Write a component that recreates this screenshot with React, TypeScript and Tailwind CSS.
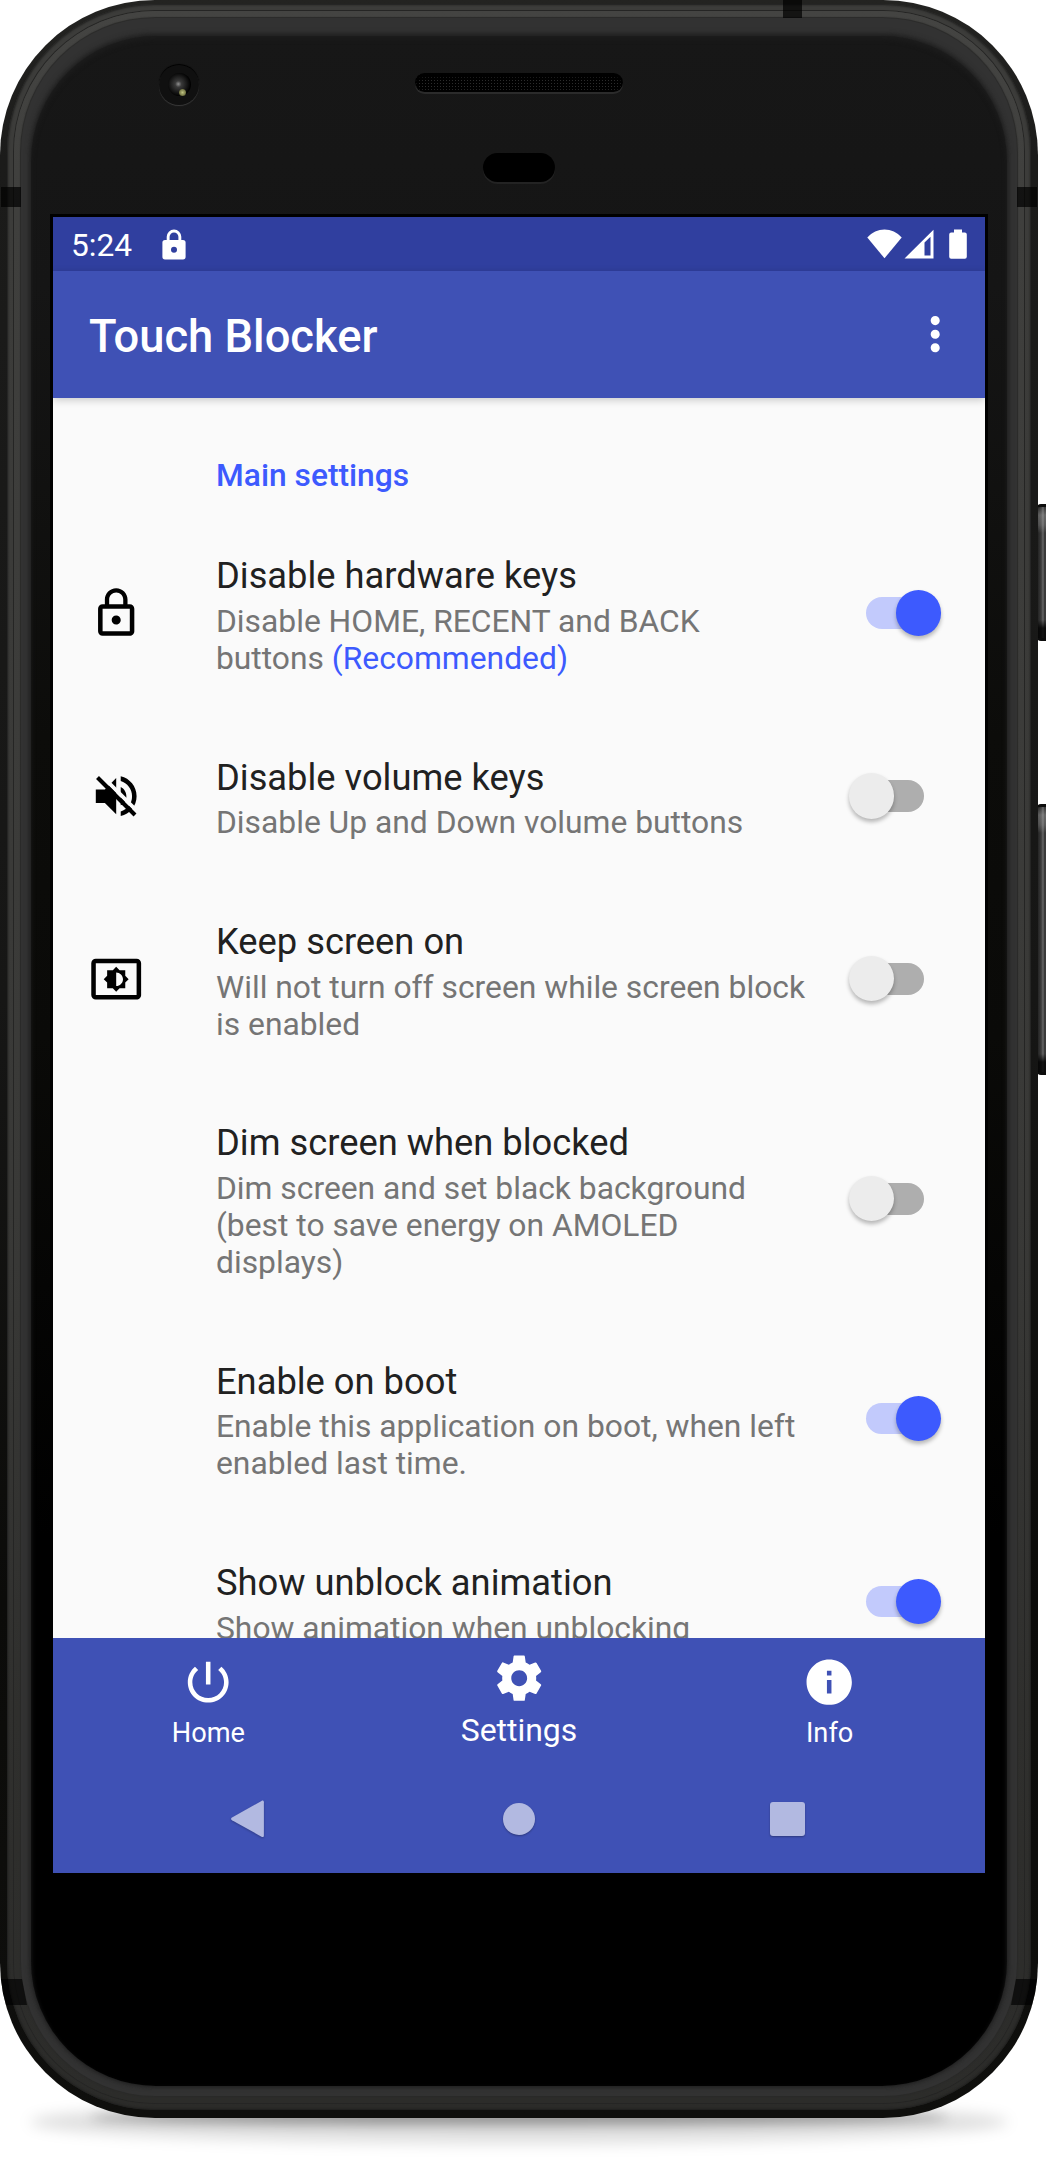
import type { ReactNode } from "react";

type Row = {
  icon?: "lock" | "volume" | "brightness";
  title: string;
  lines: ReactNode[];
  on: boolean;
  height: string;
};

const rows: Row[] = [
  {
    icon: "lock",
    title: "Disable hardware keys",
    lines: [
      "Disable HOME, RECENT and BACK",
      <>
        buttons <span className="text-[#3d5afe]">(Recommended)</span>
      </>,
    ],
    on: true,
    height: "h-[201.3px]",
  },
  { icon: "volume", title: "Disable volume keys", lines: ["Disable Up and Down volume buttons"], on: false, height: "h-[164.5px]" },
  { icon: "brightness", title: "Keep screen on", lines: ["Will not turn off screen while screen block", "is enabled"], on: false, height: "h-[201.3px]" },
  {
    title: "Dim screen when blocked",
    lines: ["Dim screen and set black background", "(best to save energy on AMOLED", "displays)"],
    on: false,
    height: "h-[238.4px]",
  },
  { title: "Enable on boot", lines: ["Enable this application on boot, when left", "enabled last time."], on: true, height: "h-[201.3px]" },
  { title: "Show unblock animation", lines: ["Show animation when unblocking"], on: true, height: "h-[164.5px]" },
];

function Icon({ children, className = "size-[54.4px]" }: { children: ReactNode; className?: string }) {
  return (
    <svg viewBox="0 0 24 24" fill="currentColor" className={`block shrink-0 ${className}`}>
      {children}
    </svg>
  );
}

function RowIcon({ name }: { name?: Row["icon"] }) {
  if (name === "lock")
    return (
      <Icon>
        <path d="M12 17c1.1 0 2-.9 2-2s-.9-2-2-2-2 .9-2 2 .9 2 2 2zm6-9h-1V6c0-2.76-2.24-5-5-5S7 3.24 7 6v2H6c-1.1 0-2 .9-2 2v10c0 1.1.9 2 2 2h12c1.1 0 2-.9 2-2V10c0-1.1-.9-2-2-2zM8.9 6c0-1.71 1.39-3.1 3.1-3.1s3.1 1.39 3.1 3.1v2H8.9V6zM18 20H6V10h12v10z" />
      </Icon>
    );
  if (name === "volume")
    return (
      <Icon>
        <path d="M3 9v6h4l5 5V4L7 9H3zm13.5 3c0-1.77-1.02-3.29-2.5-4.03v8.05c1.48-.73 2.5-2.25 2.5-4.02zM14 3.23v2.06c2.89.86 5 3.54 5 6.71s-2.11 5.85-5 6.71v2.06c4.01-.91 7-4.49 7-8.77s-2.99-7.86-7-8.77z" />
        <path d="M4.8 2.2 22.4 19.8" stroke="#fafafa" strokeWidth="1.7" />
        <path d="M3.75 3.75 20.3 20.3" stroke="currentColor" strokeWidth="1.8" />
      </Icon>
    );
  if (name === "brightness")
    return (
      <Icon>
        <path d="M21 3H3c-1.1 0-2 .9-2 2v14c0 1.1.9 2 2 2h18c1.1 0 2-.9 2-2V5c0-1.1-.9-2-2-2zm0 16.01H3V4.99h18v14.02zM8 16h2.5l1.5 1.5 1.5-1.5H16v-2.5l1.5-1.5-1.5-1.5V8h-2.5L12 6.5 10.5 8H8v2.5L6.5 12 8 13.5V16zm4-7c1.66 0 3 1.34 3 3s-1.34 3-3 3V9z" />
      </Icon>
    );
  return null;
}

function Switch({ on }: { on: boolean }) {
  return (
    <div className="relative flex h-[45.3px] w-[92.5px] shrink-0 items-center justify-center">
      <div className={`h-[31.7px] w-[58.5px] rounded-full ${on ? "bg-[#c2cafc]" : "bg-[#aeaeae]"}`} />
      <div
        className={`absolute top-0 size-[45.3px] rounded-full shadow-[0_3px_4px_rgba(0,0,0,0.28)] ${
          on ? "right-0 bg-[#3d5afe]" : "left-0 bg-[#ececec]"
        }`}
      />
    </div>
  );
}

function StatusBar() {
  return (
    <div className="flex h-[54px] shrink-0 items-center bg-[#303f9f] pl-[18px] pr-[13px] text-white">
      <span className="pt-[3px] text-[31.7px] leading-[51px]">5:24</span>
      <svg viewBox="0 0 24 31" className="ml-[30px] h-[31px] w-6" fill="currentColor">
        <path
          fillRule="evenodd"
          d="M12 .5a7.3 7.3 0 0 0-7.3 7.3V11H3a2.6 2.6 0 0 0-2.6 2.6v14.2A2.6 2.6 0 0 0 3 30.4h18a2.6 2.6 0 0 0 2.6-2.6V13.6A2.6 2.6 0 0 0 21 11h-1.7V7.8A7.3 7.3 0 0 0 12 .5Zm-4.4 10.5V7.8a4.4 4.4 0 0 1 8.8 0V11Zm4.4 6.7a3 3 0 1 1 0 6 3 3 0 0 1 0-6Z"
        />
      </svg>
      <div className="ml-auto flex items-center">
        <svg viewBox="0 0 35 30" className="h-[30px] w-[35px]" fill="currentColor">
          <path d="M.3 8.5C5 3.5 11 .6 17.5.6S30 3.5 34.7 8.5L17.5 29.3Z" />
        </svg>
        <svg viewBox="0 0 30 30" className="ml-0.5 h-[30px] w-[30px]" fill="currentColor">
          <path fillRule="evenodd" d="M.5 29.500 29.500.8v28.700ZM20.500 13.500v13h6V7.700Z" />
        </svg>
        <svg viewBox="0 0 18 30" className="ml-[15px] mr-[5px] h-[30px] w-[18px]" fill="currentColor">
          <path d="M5 .5h8v3h2.800a2 2 0 0 1 2 2v22.300a2 2 0 0 1-2 2H2.200a2 2 0 0 1-2-2V5.500a2 2 0 0 1 2-2H5Z" />
        </svg>
      </div>
    </div>
  );
}

function AppBar() {
  return (
    <header className="relative z-10 flex h-[127px] shrink-0 items-center justify-between bg-[#3f51b5] pl-[36px] pr-[23px] text-white shadow-[0_2px_8px_rgba(0,0,0,0.2)]">
      <h1 className="pt-[4px] text-[45.3px] font-medium leading-[53px]">Touch Blocker</h1>
      <Icon>
        <path d="M12 8c1.1 0 2-.9 2-2s-.9-2-2-2-2 .9-2 2 .9 2 2 2zm0 2c-1.1 0-2 .9-2 2s.9 2 2 2 2-.9 2-2-.9-2-2-2zm0 6c-1.1 0-2 .9-2 2s.9 2 2 2 2-.9 2-2-.9-2-2-2z" />
      </Icon>
    </header>
  );
}

function SettingsList() {
  return (
    <main className="h-[1240px] shrink-0 overflow-hidden bg-[#fafafa]">
      <div className="flex h-[114.4px] items-center pl-[163px]">
        <h2 className="pt-[41px] text-[31.75px] font-medium leading-[37px] text-[#3d5afe]">Main settings</h2>
      </div>
      {rows.map((row) => (
        <section key={row.title} className={`flex items-center pl-[36.3px] pr-[44px] ${row.height}`}>
          <div className="w-[126.7px] shrink-0">
            <RowIcon name={row.icon} />
          </div>
          <div className="flex flex-1 flex-col gap-[5px] self-stretch whitespace-nowrap pt-[43px]">
            <h3 className="text-[36.3px] leading-[42.5px] text-[#212121]">{row.title}</h3>
            <p className="text-[31.8px] leading-[37px] text-[#757575]">
              {row.lines.map((line, i) => (
                <span key={i} className="block">
                  {line}
                </span>
              ))}
            </p>
          </div>
          <Switch on={row.on} />
        </section>
      ))}
    </main>
  );
}

function BottomTabs() {
  return (
    <nav className="grid h-[127px] shrink-0 grid-cols-3 bg-[#3f51b5] text-white">
      <div className="flex flex-col items-center pt-[17px]">
        <Icon>
          <path d="M13 3h-2v10h2V3zm4.83 2.17l-1.42 1.42C17.99 7.86 19 9.81 19 12c0 3.87-3.13 7-7 7s-7-3.13-7-7c0-2.19 1.01-4.14 2.58-5.42L6.17 5.17C4.23 6.82 3 9.26 3 12c0 4.97 4.03 9 9 9s9-4.03 9-9c0-2.74-1.23-5.18-3.17-6.83z" />
        </Icon>
        <span className="mt-[8px] text-[27.2px] leading-8">Home</span>
      </div>
      <div className="flex flex-col items-center pt-[13px]">
        <Icon>
          <path d="M19.43 12.98c.04-.32.07-.64.07-.98s-.03-.66-.07-.98l2.11-1.65c.19-.15.24-.42.12-.64l-2-3.46c-.12-.22-.39-.3-.61-.22l-2.49 1c-.52-.4-1.08-.73-1.69-.98l-.38-2.65C14.46 2.18 14.25 2 14 2h-4c-.25 0-.46.18-.49.42l-.38 2.65c-.61.25-1.17.59-1.69.98l-2.49-1c-.23-.09-.49 0-.61.22l-2 3.46c-.13.22-.07.49.12.64l2.11 1.65c-.04.32-.07.65-.07.98s.03.66.07.98l-2.11 1.65c-.19.15-.24.42-.12.64l2 3.46c.12.22.39.3.61.22l2.49-1c.52.4 1.08.73 1.69.98l.38 2.65c.03.24.24.42.49.42h4c.25 0 .46-.18.49-.42l.38-2.65c.61-.25 1.17-.59 1.69-.98l2.49 1c.23.09.49 0 .61-.22l2-3.46c.12-.22.07-.49-.12-.64l-2.11-1.65zM12 15.5c-1.93 0-3.5-1.57-3.5-3.5s1.57-3.5 3.5-3.5 3.5 1.57 3.5 3.5-1.57 3.5-3.5 3.5z" />
        </Icon>
        <span className="mt-[7px] text-[31.9px] leading-[37px]">Settings</span>
      </div>
      <div className="flex flex-col items-center pt-[17px]">
        <Icon>
          <path d="M12 2C6.48 2 2 6.48 2 12s4.48 10 10 10 10-4.48 10-10S17.52 2 12 2zm1 15h-2v-6h2v6zm0-8h-2V7h2v2z" />
        </Icon>
        <span className="mt-[8px] text-[27.2px] leading-8">Info</span>
      </div>
    </nav>
  );
}

function SystemNav() {
  return (
    <div className="flex h-[108px] shrink-0 items-center justify-between bg-[#3f51b5] px-[178px] text-[#b2b9e1]">
      <svg viewBox="0 0 38 38" className="size-[38px] drop-shadow-[0_1px_1px_rgba(0,0,0,0.25)]" fill="currentColor">
        <path d="M1 17.600 30.500.9c1.300-.7 2.400-.1 2.400 1.300v33.200c0 1.400-1.100 2-2.400 1.300L1 20.200c-1.200-.7-1.200-1.900 0-2.600Z" />
      </svg>
      <div className="mr-[1px] size-[32.5px] rounded-full bg-current shadow-[0_1px_2px_rgba(0,0,0,0.3)]" />
      <div className="mr-[2.5px] size-[34.5px] rounded-[3px] bg-current shadow-[0_1px_2px_rgba(0,0,0,0.3)]" />
    </div>
  );
}

function SideButton({ className }: { className: string }) {
  return (
    <div
      className={`absolute left-[1037px] w-3 rounded-[4px] border-y-[3px] border-[#0c0c0c] bg-[linear-gradient(90deg,#1c1c1c_0,#3c3c3c_35%,#686868_50%,#3a3a3a_62%)] ${className}`}
    >
      <div className="h-full bg-[linear-gradient(180deg,transparent_0,rgba(190,190,190,0.35)_8px,rgba(190,190,190,0.25)_18px,transparent_26px,transparent_calc(100%-18px),rgba(0,0,0,0.8)_calc(100%-10px))]" />
    </div>
  );
}

export default function App() {
  return (
    <div className="relative h-[2158px] w-[1046px] overflow-hidden bg-white font-[Roboto,sans-serif]">
      {/* Ground shadow */}
      <div className="absolute left-[30px] top-[2100px] h-[44px] w-[978px] rounded-[50%] bg-black/12 blur-[7px]" />
      <div className="absolute left-[90px] top-[2110px] h-[15px] w-[858px] rounded-[50%] bg-black/35 blur-[6px]" />

      <SideButton className="top-[504px] h-[137px]" />
      <SideButton className="top-[804px] h-[271px]" />

      {/* Metal frame, from the outer rim inwards */}
      <div className="relative h-[2118px] w-[1038px] overflow-hidden rounded-[155px] bg-[linear-gradient(180deg,#232321_0,#1b1b1a_160px,#161615_1000px,#0b0b09_1600px,#0f0f0d_100%)] px-[7px] pb-[8px] pt-[4px]">
        <div className="h-full rounded-[148px] bg-[linear-gradient(180deg,#3c3c3a_0,#3c3c3a_200px,#393937_1200px,#30302e_1700px,#2b2b29_100%)] p-[7px] shadow-[inset_0_0_2px_1px_#1f1f1e]">
          <div className="h-full rounded-[141px] bg-[linear-gradient(180deg,#444442_0,#3f3f3d_200px,#393937_1200px,#2f2f2d_1700px,#2c2c2a_100%)] p-[7px] shadow-[0_0_0_1px_#252524]">
            <div className="h-full rounded-[134px] bg-[#323232] px-[10px] pb-[10px] pt-[18px] shadow-[0_0_1px_1px_#2a2a29]">
              {/* Front glass */}
              <div className="flex h-full flex-col items-center rounded-[125px] bg-[linear-gradient(180deg,#171717_0,#151515_250px,#0c0c0a_700px,#0a0a08_1000px,#000_1500px)] pt-[178px] shadow-[0_0_3px_1px_#222,0_-1px_6px_0_#1c1c1c,inset_0_3px_5px_#1d1d1d]">
                <div className="relative h-[1659px] w-[938px] bg-black px-[3px] pt-[3px]">
                  <div className="flex h-[1656px] w-[932px] flex-col overflow-hidden">
                    <StatusBar />
                    <AppBar />
                    <SettingsList />
                    <BottomTabs />
                    <SystemNav />
                  </div>
                </div>
              </div>
            </div>
          </div>
        </div>

        {/* Antenna lines */}
        <div className="absolute left-px top-[187px] h-5 w-5 bg-black/70" />
        <div className="absolute left-[1017px] top-[187px] h-5 w-5 bg-black/70" />
        <div className="absolute left-[783px] top-0 h-[18px] w-[19px] bg-black/70" />
        <div className="absolute left-0 top-[1979px] h-[26px] w-[27px] bg-black/65 [clip-path:polygon(0_0,22px_0,27px_100%,0_100%)]" />
        <div className="absolute left-[1011px] top-[1979px] h-[26px] w-[27px] bg-black/65 [clip-path:polygon(5px_0,100%_0,100%_100%,0_100%)]" />

        {/* Camera, earpiece and proximity sensor */}
        <div className="absolute left-[159px] top-[65px] flex size-[40px] items-center justify-center rounded-full bg-[#101010] shadow-[0_1px_1px_#3a3a3a,0_-1px_1px_#000]">
          <div className="relative mb-[2px] size-[23px] rounded-full bg-[radial-gradient(circle_at_45%_48%,#909090_0,#3a3a3a_18%,#1c1c1c_45%,#000_70%)]">
            <div className="absolute bottom-0 right-[5px] size-[7px] rounded-full bg-[radial-gradient(circle,#c0c382_0,#787a48_60%,#2c2e18_100%)]" />
          </div>
        </div>
        <div className="absolute left-[415px] top-[73px] h-[19px] w-[208px] rounded-full bg-black bg-[radial-gradient(#2c2c2c_0.8px,transparent_1px)] bg-[size:3px_3px] shadow-[0_2px_0_#2b2b2b,inset_0_4px_3px_#000,inset_0_0_3px_1px_#000]" />
        <div className="absolute left-[483px] top-[153px] h-[29px] w-[72px] rounded-full bg-black shadow-[0_2px_0_#232323]" />
      </div>
    </div>
  );
}
